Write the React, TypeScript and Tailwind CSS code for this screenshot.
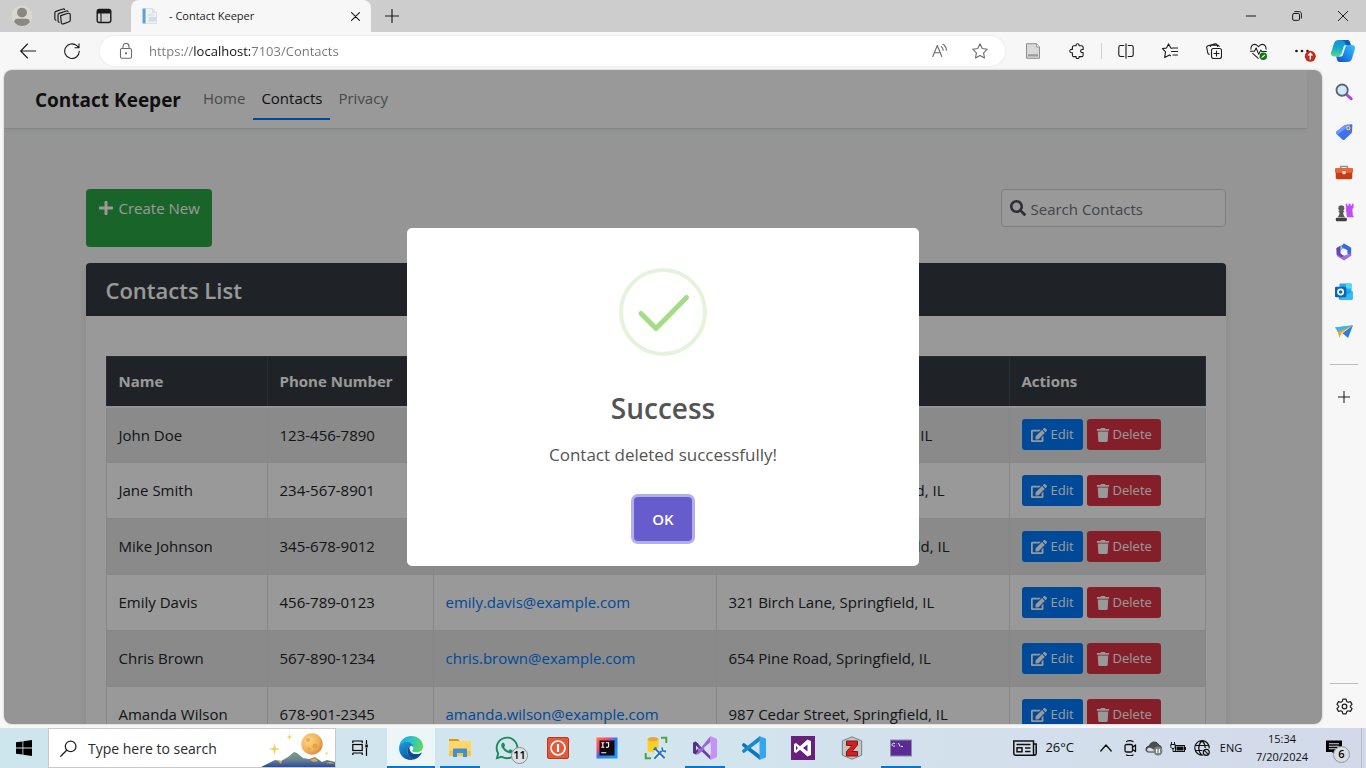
import type { ReactNode } from "react";
import { FaEdit, FaPlus, FaSearch, FaTrash, FaWhatsapp } from "react-icons/fa";

type Contact = { name: string; phone: string; email: string; address: string };

const contacts: Contact[] = [
  { name: "John Doe", phone: "123-456-7890", email: "john.doe@example.com", address: "123 Elm Street, Springfield, IL" },
  { name: "Jane Smith", phone: "234-567-8901", email: "jane.smith@example.com", address: "456 Oak Avenue, Springfield, IL" },
  { name: "Mike Johnson", phone: "345-678-9012", email: "mike.johnson@example.com", address: "789 Maple Street, Springfield, IL" },
  { name: "Emily Davis", phone: "456-789-0123", email: "emily.davis@example.com", address: "321 Birch Lane, Springfield, IL" },
  { name: "Chris Brown", phone: "567-890-1234", email: "chris.brown@example.com", address: "654 Pine Road, Springfield, IL" },
  { name: "Amanda Wilson", phone: "678-901-2345", email: "amanda.wilson@example.com", address: "987 Cedar Street, Springfield, IL" },
];

/* 16px line icon */
function Line({ children, className = "size-4" }: { children: ReactNode; className?: string }) {
  return (
    <svg viewBox="0 0 16 16" className={className} fill="none" stroke="currentColor" strokeWidth="1.1" strokeLinecap="round" strokeLinejoin="round" aria-hidden="true">
      {children}
    </svg>
  );
}

/* 24px colour icon */
function Art({ children, className = "size-6" }: { children: ReactNode; className?: string }) {
  return (
    <svg viewBox="0 0 24 24" className={className} fill="none" aria-hidden="true">
      {children}
    </svg>
  );
}

function IconButton({ label, className = "w-11", children }: { label: string; className?: string; children: ReactNode }) {
  return (
    <button type="button" aria-label={label} className={`flex h-full shrink-0 items-center justify-center ${className}`}>
      {children}
    </button>
  );
}

function TabStrip() {
  return (
    <div className="flex h-8 shrink-0 items-stretch bg-[#cdcdcd] pl-0.5 text-[#1b1b1b]">
      <IconButton label="Profile" className="w-10">
        <Art className="size-[22px]">
          <circle cx="12" cy="12" r="11.5" fill="#dad7d3" />
          <circle cx="12" cy="8.3" r="5.4" fill="#8c8783" />
          <path d="M3.5 18.5c0-2.400 1.600-3.500 3.500-3.500h10c1.900 0 3.500 1.100 3.500 3.500-1.800 3-5 4.500-8.500 4.500s-6.700-1.500-8.500-4.500z" fill="#8c8783" />
        </Art>
      </IconButton>
      <IconButton label="Workspaces" className="w-10">
        <Line className="size-[17px]">
          <path d="M6.300 7.200l7-2.200c1-.3 2 .3 2 1.300v5.200c0 .7-.4 1.200-1 1.400l-5.500 2c-1 .4-2-.2-2-1.300z" />
          <path d="M4.800 13.500c-.7-.3-1-.8-1-1.500V6.500c0-.7.4-1.200 1-1.400l6.800-2.300c.6-.2 1.200 0 1.500.5" />
          <path d="M1.800 11.500c-.7-.3-1-.8-1-1.500V4.600c0-.7.4-1.200 1-1.400L8.500 1c.6-.2 1.200 0 1.500.5" />
        </Line>
      </IconButton>
      <IconButton label="Tab actions" className="w-11">
        <Line>
          <rect x="1.200" y="1.500" width="13.600" height="13" rx="2.200" strokeWidth="1.400" />
          <path d="M1.500 5V3.500c0-1.200.8-2 2-2h9c1.200 0 2 .8 2 2V5z" fill="currentColor" />
          <path d="M5 5v9.500" />
        </Line>
      </IconButton>
      <div className="ml-[5px] flex w-60 items-center rounded-t-lg bg-[#f7f7f7] pl-[11px] text-[#1b1b1b]">
        <svg viewBox="0 0 16 16" className="size-4 shrink-0" aria-hidden="true">
          <path d="M3 .5h7.500l4 4v11H3z" fill="#eef2f6" stroke="#d3d9e0" strokeWidth=".7" />
          <path d="M10.500.5v4h4" fill="#dfe6ee" stroke="#cfd6de" strokeWidth=".6" />
          <rect x=".5" y=".5" width="3" height="15" fill="#5aa3d6" />
          <path d="M6 7h6M6 13h7" stroke="#ccd6e2" strokeWidth="1" />
          <rect x="7" y="9" width="8" height="4" fill="#d3dbe5" />
        </svg>
        <span className="ml-[11px] flex-1 truncate text-[11px]">- Contact Keeper</span>
        <button type="button" aria-label="Close tab" className="flex size-8 items-center justify-center">
          <Line className="size-[9px]">
            <path d="M1 1l14 14M15 1L1 15" strokeWidth="2" />
          </Line>
        </button>
      </div>
      <IconButton label="New tab" className="w-[42px]">
        <Line className="size-3.5">
          <path d="M8 .5v15M.5 8h15" strokeWidth="1.300" />
        </Line>
      </IconButton>
      <div className="flex-1" />
      <IconButton label="Minimize" className="w-[46px]">
        <Line className="size-2.5">
          <path d="M0 8h16" strokeWidth="1.600" />
        </Line>
      </IconButton>
      <IconButton label="Restore" className="w-[46px]">
        <Line className="size-2.5">
          <rect x="1" y="4" width="11" height="11" rx="2" strokeWidth="1.600" />
          <path d="M4.500 1h7C13.500 1 15 2.500 15 4.500v7" strokeWidth="1.600" />
        </Line>
      </IconButton>
      <IconButton label="Close" className="w-[46px]">
        <Line className="size-2.5">
          <path d="M.5.5l15 15M15.500.5l-15 15" strokeWidth="1.600" />
        </Line>
      </IconButton>
    </div>
  );
}

function Toolbar() {
  return (
    <div className="flex h-[38px] shrink-0 items-center bg-[#f7f7f7] pl-1.5 text-[#1b1b1b]">
      <IconButton label="Back">
        <Line>
          <path d="M7.500 1L.7 8l6.800 7M.8 8h15" />
        </Line>
      </IconButton>
      <IconButton label="Refresh">
        <Line>
          <path d="M15.300 8.300A7.300 7.300 0 1 1 12.800 2.700L15 4.700M15 .8v4h-4" />
        </Line>
      </IconButton>
      <div className="mx-1.5 flex h-[30px] min-w-0 flex-1 items-center rounded-full bg-white pl-[18px] shadow-[0_0_3px_rgba(0,0,0,0.08)]">
        <Line className="size-4 shrink-0 text-[#6b6b6b]">
          <rect x="2.500" y="5.500" width="11" height="9.700" rx="1.500" />
          <path d="M5 5.300V3.500a3 3 0 0 1 6 0v1.800" />
          <circle cx="8" cy="10.300" r=".6" fill="currentColor" />
        </Line>
        <input
          aria-label="Address"
          defaultValue="https://localhost:7103/Contacts"
          className="ml-[15px] h-6 min-w-0 flex-1 bg-[linear-gradient(to_right,#767676_45px,#111111_45px,#111111_101px,#767676_101px)] bg-clip-text text-[13px] text-transparent outline-none"
        />
        <button type="button" aria-label="Read aloud" className="flex w-10 items-center justify-center text-[#6b6b6b]">
          <Line>
            <path d="M.8 13.500L5.300 2.500l4.500 11M2.400 9.700h5.900M9.300 3.600c1.200.9 1.800 2 1.800 3.600M11 1.300c2.200 1.400 3.400 3.300 3.400 6" />
          </Line>
        </button>
        <button type="button" aria-label="Add to favorites" className="mr-[5px] flex w-10 items-center justify-center text-[#6b6b6b]">
          <Line>
            <path d="M8 .8l2.200 4.700 5.100.7-3.700 3.600.9 5.200L8 12.500 3.500 15l.9-5.200L.7 6.200l5.100-.7z" />
          </Line>
        </button>
      </div>
      <IconButton label="Extension">
        <svg viewBox="0 0 16 16" className="size-4" aria-hidden="true">
          <path d="M1.500.7h10L14.500 4v11.300h-13z" fill="#d9d9d9" stroke="#8e8e8e" strokeWidth="1" />
          <rect x="3" y="11.200" width="10" height="2.300" fill="#9b9b9b" />
          <path d="M11.500.7V4h3" fill="#f3f3f3" stroke="#8e8e8e" strokeWidth=".8" />
        </svg>
      </IconButton>
      <IconButton label="Extensions">
        <Line>
          <path d="M4.800 2.800h2.300c-.2-1.400.5-2.100 1.500-2.100s1.700.7 1.500 2.100h2.600c.8 0 1.400.6 1.400 1.400v2.300c-1.600-.3-2.500.4-2.500 1.500s.9 1.800 2.500 1.500v2.700c0 .8-.6 1.400-1.400 1.400h-2.600c.2 1.300-.5 1.900-1.500 1.900s-1.700-.6-1.500-1.900H4.800c-.8 0-1.400-.6-1.400-1.400V9.700C1.700 10 .8 9.200.8 8s.9-1.900 2.600-1.600V4.200c0-.8.6-1.400 1.400-1.400z" />
        </Line>
      </IconButton>
      <span className="mx-0.5 h-4 w-px bg-[#cfcfcf]" />
      <IconButton label="Split screen">
        <Line>
          <path d="M8 .8v14.400M5.800 2.500H2.500C1.500 2.500.8 3.200.8 4.200v7.600c0 1 .7 1.700 1.700 1.700h3.300M10.200 2.500h3.300c1 0 1.700.7 1.700 1.700v7.600c0 1-.7 1.700-1.700 1.700h-3.300" />
        </Line>
      </IconButton>
      <IconButton label="Favorites">
        <Line>
          <path d="M10 5.200H9L6.500.9 4.500 5l-4 .6 3 3.300-.8 5.500L7.500 12l1 .7M10.500 5h5M9.500 8.500h6M11 12h4.500" />
        </Line>
      </IconButton>
      <IconButton label="Collections">
        <Line>
          <rect x="5.500" y="5.500" width="10" height="10" rx="2" />
          <path d="M10.500 8v5M8 10.500h5M3.300 11.300C2.500 11.300 2 10.800 1.800 10L.7 4.700C.5 3.700 1 3 2 2.700L9.200.8c1-.2 1.800.3 2 1.200l.4 1.400M4.300 3.500c0-1 .5-1.400 1.500-1.400h5.500c1 0 1.700.5 1.900 1.400" />
        </Line>
      </IconButton>
      <IconButton label="Browser essentials">
        <svg viewBox="0 0 16 16" className="size-[17px]" fill="none" stroke="currentColor" strokeWidth="1" strokeLinejoin="round" aria-hidden="true">
          <path d="M.9 6.200C.5 3.300 2.200 1.300 4.400 1.300c1.600 0 2.700.9 3.600 2.200.9-1.300 2-2.200 3.600-2.200 2.200 0 3.900 2 3.500 4.900M2.300 9.500L8 14.800" />
          <path d="M0 7.700h4.200l1.600-3 2.400 6 1.900-4 1 1.300h4.700" />
          <circle cx="12.500" cy="12.500" r="3.500" fill="#0f7b0f" stroke="none" />
          <path d="M11 13.700l3-2.400" stroke="#fff" />
        </svg>
      </IconButton>
      <IconButton label="Settings and more">
        <svg viewBox="0 0 22 22" className="mt-1 ml-1.5 size-[22px]" aria-hidden="true">
          <circle cx="2.500" cy="9" r="1.300" fill="#1b1b1b" />
          <circle cx="8" cy="9" r="1.300" fill="#1b1b1b" />
          <circle cx="13.500" cy="9" r="1.300" fill="#1b1b1b" />
          <circle cx="16.300" cy="14.300" r="5.500" fill="#c42b1c" />
          <path d="M16.300 17.500v-6M14.200 13.500l2.100-2.200 2.100 2.200" stroke="#fff" strokeWidth="1.300" fill="none" />
        </svg>
      </IconButton>
      <IconButton label="Copilot" className="w-[42px]">
        <Art className="mr-1 size-6">
          <defs>
            <linearGradient id="cpA" x1="0" y1="0" x2="0" y2="1">
              <stop offset="0" stopColor="#0f8fe0" />
              <stop offset=".5" stopColor="#17acc4" />
              <stop offset="1" stopColor="#55d88c" />
            </linearGradient>
            <linearGradient id="cpB" x1="1" y1="0" x2="0" y2="1">
              <stop offset="0" stopColor="#35c5f5" />
              <stop offset=".6" stopColor="#1a7fe8" />
              <stop offset="1" stopColor="#1147c9" />
            </linearGradient>
          </defs>
          <path d="M8 1h8.500c1.500 0 2 .9 2.500 2.400L19.800 6h-4.300c-1.500 0-2.400.8-2.900 2.300L11 13.500c-.9 2.800-2.300 4-4.500 4H3.200C.6 17.500-.5 15.800.2 13.200L3 4.500C3.800 2 5.300 1 8 1z" fill="url(#cpA)" />
          <path d="M16 23H8.500C7 23 6.500 22.100 6 20.600L5.200 17.500h2.300c1.500 0 2.400-.8 2.900-2.300L12.500 9c.8-2.300 1.800-3 3.500-3h4.800c2.600 0 3.700 1.700 3 4.300L21 19.500c-.8 2.500-2.300 3.500-5 3.500z" fill="url(#cpB)" />
          <path d="M13.200 6.500h2.600c-.7.500-1.200 1-1.500 2L12 15.500c-.3 1-.8 1.600-1.500 2H8c1.200-.4 2-1.200 2.500-2.500l2.200-7c.2-.8.300-1.200.5-1.500z" fill="#eaf7fb" />
          <path d="M8 1h8.500c1.500 0 2 .9 2.500 2.400L19.800 6h-3.600c-1.200 0-1.700-.5-2-1.600C13.500 2 12 1 8 1z" fill="#0b5fc4" />
        </Art>
      </IconButton>
    </div>
  );
}

const sideApps: { label: string; icon: ReactNode }[] = [
  {
    label: "Search",
    icon: (
      <Art className="size-[18px]">
        <path d="M15 15l6.500 6" stroke="#b23ff0" strokeWidth="4" strokeLinecap="round" />
        <circle cx="9.500" cy="9.500" r="7.500" fill="#cdeafc" stroke="#5c6166" strokeWidth="2.400" />
      </Art>
    ),
  },
  {
    label: "Shopping",
    icon: (
      <Art className="size-[18px]">
        <path d="M13 2.500L22 1.500c.8 0 1.200.4 1.200 1.200L22.500 13 13 22c-1 1-2.200 1-3.200 0L2 14.500c-1-1-1-2.200 0-3.200z" fill="#3f6ff2" />
        <path d="M13 2.500L22 1.500 3 15.500l-1-1c-1-1-1-2.200 0-3.200z" fill="#6a9bff" />
        <circle cx="17.800" cy="6.800" r="2.200" fill="#4a78e8" stroke="#ffd84a" strokeWidth="1.500" />
      </Art>
    ),
  },
  {
    label: "Tools",
    icon: (
      <Art className="size-[18px]">
        <path d="M7.500 7V4.500h9V7" stroke="#8b9298" strokeWidth="2" />
        <rect x="1" y="6.500" width="22" height="15" rx="1.500" fill="#c73d13" />
        <rect x="0" y="6.500" width="24" height="6.500" rx="1.500" fill="#ea6533" />
        <rect x="9.800" y="10.500" width="4.500" height="4.500" rx="1" fill="#e6e9ec" />
      </Art>
    ),
  },
  {
    label: "Games",
    icon: (
      <Art className="size-[19px]">
        <path d="M13.500 1h2v2h1.700V1h2.500v2h1.700V1h2v5l-1.500 1.500.7 8.500h1v2h-8.500l-1-8z" fill="#c04df5" />
        <circle cx="8" cy="6.500" r="3.800" fill="#5c5c5c" />
        <path d="M4.500 10h7v1.800h-1.300c.1 2.700.9 4.600 2.600 6.200H3.200c1.700-1.600 2.500-3.500 2.600-6.200H4.500z" fill="#565656" />
        <rect x="1" y="18.500" width="14" height="4.500" rx="1.500" fill="#3f3f3f" />
      </Art>
    ),
  },
  {
    label: "Microsoft 365",
    icon: (
      <Art className="size-[18px]">
        <path d="M12 .8l9.500 5.600v4.200L12 7.500 7.500 10v7.500L2 15V6.800z" fill="#8fb7f4" />
        <path d="M12 .8l9.500 5.600v10.500l-5-3V9.500L8.500 5z" fill="#3c66dc" />
        <path d="M2 15.500V7l5-3v10l5 3 9.500-3.500v3.500L12 23.200 3.500 18z" fill="#a070d8" />
        <path d="M2 7l5-3v10l5 3-3 2-6-3.500z" fill="#6246b8" />
        <path d="M12 7.500l4 2.300v4.600l-4 2.300-4-2.300V9.800z" fill="#f7f7f7" />
      </Art>
    ),
  },
  {
    label: "Outlook",
    icon: (
      <Art className="size-[18px]">
        <rect x="6" y=".5" width="16" height="15" rx="1" fill="#28a8ea" />
        <rect x="14.500" y=".5" width="7.500" height="7" fill="#50d9ff" />
        <path d="M5 11h18.500v10c0 .8-.5 1.300-1.300 1.300H6.300C5.500 22.300 5 21.800 5 21z" fill="#1aa0e8" />
        <path d="M5 22l18.500-11v10c0 .8-.5 1.300-1.300 1.300z" fill="#32bdf2" />
        <rect x="0" y="5" width="15" height="14" rx="1.500" fill="#0f64b8" />
        <circle cx="7.500" cy="12" r="3.500" stroke="#fff" strokeWidth="2.200" />
      </Art>
    ),
  },
  {
    label: "Drop",
    icon: (
      <Art className="size-[18px]">
        <path d="M0 6l24-3-14 8z" fill="#37b6f0" />
        <path d="M24 3L9 13l-3 7-3-10z" fill="#f5a623" />
        <path d="M0 6l24-3L4 12z" fill="#37b6f0" />
        <path d="M24 3l-6.500 17L10 13.500z" fill="#2b7fe0" />
      </Art>
    ),
  },
];

function Sidebar() {
  return (
    <aside className="flex w-11 shrink-0 flex-col items-center pt-0.5 text-[#1b1b1b]">
      {sideApps.map((a) => (
        <button key={a.label} type="button" aria-label={a.label} className="flex h-10 w-11 items-center justify-center">
          {a.icon}
        </button>
      ))}
      <span className="mt-3 h-px w-7 bg-[#bdbdbd]" />
      <button type="button" aria-label="Customize" className="mt-3 flex h-10 w-11 items-center justify-center">
        <Line className="size-3">
          <path d="M8 .5v15M.5 8h15" strokeWidth="1.400" />
        </Line>
      </button>
      <span className="mt-auto h-px w-7 bg-[#bdbdbd]" />
      <button type="button" aria-label="Settings" className="flex h-11 w-11 items-center justify-center">
        <Line className="size-[17px]">
          <path d="M6.500 1h3l.6 2.200 1.300.8 2.200-.6 1.500 2.600L13.500 7.600v.8l1.600 1.600-1.500 2.600-2.200-.6-1.300.8-.6 2.200h-3l-.6-2.200-1.300-.8-2.200.6L.9 10l1.600-1.600v-.8L.9 6l1.500-2.600 2.200.6 1.300-.8z" />
          <circle cx="8" cy="8" r="2.200" />
        </Line>
      </button>
    </aside>
  );
}

function Navbar() {
  return (
    <nav className="flex h-[59px] items-start border-b border-[#dee2e6] bg-white pl-[31px] shadow-[0_2px_6px_rgba(0,0,0,0.05)]">
      <a href="#home" className="pt-[15px] text-[19px] leading-[30px] font-bold text-[#1a1a1a]">
        Contact Keeper
      </a>
      <ul className="ml-3.5 flex pt-2 text-[15px] leading-6 text-[#7b7b7b]">
        <li>
          <a href="#home" className="block px-2 py-2">Home</a>
        </li>
        <li>
          <a href="#contacts" className="block border-b-2 border-[#007bff] px-2 py-2 text-[#1a1a1a]">Contacts</a>
        </li>
        <li>
          <a href="#privacy" className="block px-2 py-2">Privacy</a>
        </li>
      </ul>
    </nav>
  );
}

const headCell = "border border-b-2 border-[#454d55] border-b-[#f8f9fa] px-3 text-left font-bold";
const bodyCell = "border border-[#dee2e6] px-3";

function ContactsTable() {
  return (
    <table className="w-full table-fixed border-collapse text-[15px] text-[#212529]">
      <colgroup>
        <col className="w-[161px]" />
        <col className="w-[166px]" />
        <col className="w-[283px]" />
        <col className="w-[293px]" />
        <col />
      </colgroup>
      <thead className="bg-[#343a40] text-white">
        <tr className="h-[50px]">
          <th className={headCell}>Name</th>
          <th className={headCell}>Phone Number</th>
          <th className={headCell}>Email</th>
          <th className={headCell}>Address</th>
          <th className={headCell}>Actions</th>
        </tr>
      </thead>
      <tbody>
        {contacts.map((c) => (
          <tr key={c.name} className="h-14 odd:bg-[#e6e6e6]">
            <td className={bodyCell}>{c.name}</td>
            <td className={bodyCell}>{c.phone}</td>
            <td className={bodyCell}>
              <a href={`mailto:${c.email}`} className="text-[#007bff]">{c.email}</a>
            </td>
            <td className={bodyCell}>{c.address}</td>
            <td className={bodyCell}>
              <div className="flex gap-1 text-[13px] text-white">
                <button type="button" className="flex h-[31px] items-center gap-1 rounded-[3px] bg-[#007bff] px-[9px]">
                  <FaEdit className="size-4" />
                  Edit
                </button>
                <button type="button" className="flex h-[31px] items-center gap-[3px] rounded-[3px] bg-[#dc3545] px-[9px]">
                  <FaTrash className="size-3.5" />
                  Delete
                </button>
              </div>
            </td>
          </tr>
        ))}
      </tbody>
    </table>
  );
}

function ContactsPage() {
  return (
    <div className="h-full bg-[#f8f9fa]">
      <div className="pr-[15px]">
        <Navbar />
        <main className="mx-auto max-w-[1140px] pt-[60px]">
          <div className="flex items-start justify-between">
            <button type="button" className="flex h-[58px] items-start gap-[5px] rounded bg-[#28a745] px-3 pt-[7px] text-[15px] leading-6 text-white">
              <FaPlus className="mt-1 size-4" />
              Create New
            </button>
            <label className="flex h-[38px] w-[225px] items-center gap-[5px] rounded border border-[#ced4da] bg-white px-2 text-[15px]">
              <FaSearch className="size-4 shrink-0 text-[#495057]" />
              <input type="search" aria-label="Search contacts" placeholder="Search Contacts" className="min-w-0 flex-1 pt-0.5 outline-none placeholder:text-[#6c757d]" />
            </label>
          </div>
          <section className="mt-4 rounded bg-white shadow-[0_4px_8px_rgba(0,0,0,0.1)]">
            <h2 className="flex h-[53px] items-center rounded-t bg-[#343a40] px-5 pt-0.5 text-[22px] font-semibold text-white">Contacts List</h2>
            <div className="px-5 pt-10">
              <ContactsTable />
            </div>
          </section>
        </main>
      </div>
    </div>
  );
}

function SuccessDialog() {
  return (
    <div className="absolute inset-0 flex items-center justify-center bg-black/40">
      <div role="dialog" aria-modal="true" aria-labelledby="dialog-title" className="flex w-lg flex-col items-center rounded-[5px] bg-white pt-10 pb-[25px]">
        <svg viewBox="0 0 88 88" className="size-[88px]" fill="none" aria-hidden="true">
          <circle cx="44" cy="44" r="42" stroke="#e4f4dc" strokeWidth="4" />
          <path d="M22 45.500L37 60.500L67.500 29.500" stroke="#a5dc86" strokeWidth="5" strokeLinecap="round" strokeLinejoin="round" />
        </svg>
        <h2 id="dialog-title" className="mt-[34px] text-[28px] leading-9 font-semibold text-[#545454]">Success</h2>
        <p className="mt-[17px] text-[17px] leading-6 text-[#545454]">Contact deleted successfully!</p>
        <button type="button" className="mt-[30px] h-11 w-[58px] rounded-[4px] bg-[#665ccb] text-[15px] font-semibold text-white shadow-[0_0_0_3px_#b2adeb]">
          OK
        </button>
      </div>
    </div>
  );
}

const taskApps: { label: string; state: string; icon: ReactNode }[] = [
  {
    label: "Microsoft Edge",
    state: "active",
    icon: (
      <Art>
        <defs>
          <linearGradient id="edA" x1="0" y1=".3" x2="1" y2=".5">
            <stop offset="0" stopColor="#23a8e0" />
            <stop offset=".5" stopColor="#2bc3c4" />
            <stop offset="1" stopColor="#62d957" />
          </linearGradient>
          <linearGradient id="edB" x1="0" y1="0" x2=".4" y2="1">
            <stop offset="0" stopColor="#1b9de2" />
            <stop offset="1" stopColor="#0b5aa8" />
          </linearGradient>
        </defs>
        <path d="M.2 11C.8 4.500 6 0 12.200 0 19 0 24 4.800 24 10.200c0 3.800-2.900 6.300-6.500 6.300-2.700 0-4.300-.8-4.300-1.700 0-.7 1-1 1-2.800 0-2.400-2.400-4.500-5.700-4.500C4.800 7.500 1.500 9 .2 11z" fill="url(#edA)" />
        <path d="M.1 12c.2-3.400 4-6 8-6 3.800 0 6.200 2.600 6.100 5.500C12 9.300 8.300 11 8.300 14.800c0 3.700 2.900 6.700 6.700 8.800-1 .3-2 .4-3 .4C5 24 0 18.500.1 12z" fill="url(#edB)" />
        <path d="M8.300 14.800c0-1.900.9-3.400 2.500-4.400-.8 3.600 2 7.600 6.500 7.600 2 0 3.500-.5 4.700-1.300.5-.3.900.1.600.6-2.300 3.900-5.200 5.700-7.600 6.300-3.800-1.600-6.700-5.100-6.700-8.800z" fill="#0c4c8e" />
        <path d="M14.200 11.800c0 1.700-1.100 2.100-1.100 3 0 1.200 1.800 1.900 4.300 1.900 1.800 0 3.700-.7 5-2v1.600c-1.400 1.200-3 1.700-5 1.700-4 0-6.800-2.300-6.800-5.300 0-1.300.7-2.400 1.600-3 1.100.3 2 1 2 2.100z" fill="#ecf5f8" />
      </Art>
    ),
  },
  {
    label: "File Explorer",
    state: "open",
    icon: (
      <Art>
        <path d="M1 3h9l2 2.500H1z" fill="#d99a0b" />
        <path d="M1 5h21c.6 0 1 .4 1 1v13c0 .6-.4 1-1 1H2c-.6 0-1-.4-1-1z" fill="#ffd667" />
        <path d="M1 15h22v4c0 .6-.4 1-1 1H2c-.6 0-1-.4-1-1z" fill="#f9c544" />
        <path d="M5 21v-7.500c0-.6.500-1 1-1h12c.6 0 1 .4 1 1V21h-4v-4H9v4z" fill="#3e8fd6" />
      </Art>
    ),
  },
  {
    label: "WhatsApp",
    state: "",
    icon: (
      <span className="relative mr-1">
        <FaWhatsapp className="size-[26px] text-[#1a8a5a]" />
        <span className="absolute top-3 left-[17px] flex size-[17px] items-center justify-center rounded-full border border-[#8a8f93] bg-[#dce3e6] text-[11px] font-semibold text-black">11</span>
      </span>
    ),
  },
  {
    label: "Power",
    state: "",
    icon: (
      <Art>
        <rect x="1.500" y="1.500" width="21" height="21" rx="1.500" fill="#e65738" stroke="#b53b20" />
        <circle cx="12" cy="12" r="7" stroke="#fff" strokeWidth="1.700" />
        <path d="M12 8v8" stroke="#fff" strokeWidth="2.200" />
      </Art>
    ),
  },
  {
    label: "IntelliJ IDEA",
    state: "",
    icon: (
      <Art>
        <defs>
          <linearGradient id="ijA" x1="0" y1="0" x2="1" y2="1">
            <stop offset="0" stopColor="#ff7a2a" />
            <stop offset=".3" stopColor="#ff3f7c" />
            <stop offset=".5" stopColor="#2b7bf6" />
            <stop offset="1" stopColor="#1ba0ff" />
          </linearGradient>
        </defs>
        <rect x="1.500" y="1.500" width="21" height="21" fill="url(#ijA)" />
        <rect x="4.500" y="4.500" width="15" height="15" fill="#15060f" />
        <path d="M6.300 6.800h3M7.800 6.800v4.500M6.300 11.300h3M10.800 6.800h2.800v3.500c0 1-1.300 1.400-2.600.8M6.300 16.800h5" stroke="#fff" strokeWidth="1.100" />
      </Art>
    ),
  },
  {
    label: "Database tools",
    state: "",
    icon: (
      <Art>
        <path d="M3.500 3v12c2 1.800 8.500 1.800 11 0V3z" fill="#fbd11f" />
        <ellipse cx="9" cy="3.200" rx="5.500" ry="2.200" fill="#e9a43c" />
        <path d="M17 1.700h5.300V7M1.700 17v5.300H7" stroke="#4ba348" strokeWidth="2" />
        <path d="M11 13l8.500 8.500M20.500 12.500L11 22" stroke="#f0f6fa" strokeWidth="4.500" />
        <path d="M11 12.500l9 9M17 15.500l-6 6.500" stroke="#2676c4" strokeWidth="2" strokeLinecap="round" />
        <path d="M18 11.500l.7 3.300 3.300.7M9.500 14l3-2.500" stroke="#2676c4" strokeWidth="1.800" />
      </Art>
    ),
  },
  {
    label: "Visual Studio",
    state: "open",
    icon: (
      <Art>
        <path d="M0 7l2.500-1.500L17.500 20v3.800L0 7z" fill="#6b3da8" />
        <path d="M0 7l2.500-1.500 3 2.500v8l-3 2.500L0 17z" fill="#52308a" />
        <path d="M2.500 18.500L17.500 0v8.500L5 18.500 2.500 18.500z" fill="#9a68d4" />
        <path d="M17.500 0L24 3v18l-6.500 3z" fill="#c493f5" />
        <path d="M17.500 6v12l-7-6z" fill="#d5def0" />
        <path d="M3 9.500v5l2.500-2.500z" fill="#d5def0" />
      </Art>
    ),
  },
  {
    label: "Visual Studio Code",
    state: "",
    icon: (
      <Art>
        <path d="M0 8.500l1.700-1.800L18 19v5L.3 10z" fill="#0f74b9" />
        <path d="M0 15.500l1.700 1.800L18 5V0L.3 14z" fill="#1a88ce" />
        <path d="M17.500 0L24 2.800v18.400L17.500 24z" fill="#35a5ee" />
      </Art>
    ),
  },
  {
    label: "Visual Studio 2012",
    state: "",
    icon: (
      <Art>
        <rect width="24" height="24" fill="#68217a" />
        <path d="M16.500 3.500L20 5v14l-3.500 1.500L9 13.700 5 17l-2-1V8l2-1 4 3.300zM16.500 8.500L12 12l4.500 3.500zM5 9.800v4.400L7 12z" fill="#fff" fillRule="evenodd" />
      </Art>
    ),
  },
  {
    label: "Zotero",
    state: "",
    icon: (
      <Art>
        <path d="M12 .8l9.700 4v14.400L12 23.200l-9.700-4V4.800z" fill="#c3c6c7" stroke="#7b7f80" strokeWidth="1" />
        <path d="M6.500 5h11v4L12 15.500h5.500V20h-11v-4.500L12 9.500H6.500z" fill="#d42020" stroke="#861313" strokeWidth="1" />
      </Art>
    ),
  },
  {
    label: "Developer command prompt",
    state: "open",
    icon: (
      <Art>
        <rect x="1.500" y="4" width="21" height="16" fill="#5b2a97" stroke="#8a8f98" strokeWidth="1" />
        <path d="M6 7.500c-2-.8-3 .3-3 1.200s1 2 3 1.200M7.800 7.800v.2M7.800 9.800v.2M9.500 7l1.500 3.500M12 10.500h2" stroke="#fff" strokeWidth=".9" />
      </Art>
    ),
  },
];

function Tray() {
  return (
    <div className="flex h-full items-center text-[11px] text-[#101010]">
      <svg viewBox="0 0 24 16" className="h-4 w-6" fill="none" stroke="currentColor" strokeWidth="1.500" aria-hidden="true">
        <path d="M20.500 4h2.700v9.500c0 1-.8 1.700-1.700 1.700H2.500c-1 0-1.700-.7-1.700-1.700V1h19.700v12.500c0 .8.500 1.500 1.200 1.500" />
        <path d="M3.500 4.500h14M12 8h5.500M12 11.500h5.500" />
        <rect x="4" y="7.800" width="5" height="4" />
      </svg>
      <span className="mr-5 ml-2 text-[13px]">26°C</span>
      <div className="flex h-full">
        <IconButton label="Show hidden icons" className="w-6">
          <Line className="size-3">
            <path d="M1 12l7-8 7 8" strokeWidth="1.700" />
          </Line>
        </IconButton>
        <IconButton label="Meet now" className="w-6">
          <Line>
            <rect x="3" y="4.500" width="7.500" height="7.500" rx="1.500" strokeWidth="1.300" />
            <path d="M10.500 7.200L13.500 5v6.500l-3-2M4.500 1.500c2-1 4.500-1 6.500 0M4.500 15c2 1 4.500 1 6.500 0" strokeWidth="1.300" />
          </Line>
        </IconButton>
        <IconButton label="OneDrive" className="w-6">
          <svg viewBox="0 0 18 16" className="h-4 w-[18px]" aria-hidden="true">
            <path d="M1 9.500C1 7.300 2.600 6 4.500 6 5 3.500 7 2 9.300 2c2.200 0 3.800 1.300 4.500 3.300 1.600.2 2.700 1.500 2.700 3L11 12H3.500C2 12 1 11 1 9.500z" fill="#4b4f52" stroke="#33373a" />
            <path d="M2 9.500c.5-1.700 2.500-2.200 4-1.500l6 3.500H4c-1.200 0-2-.8-2-2z" fill="#d4d9dd" />
            <circle cx="13" cy="11" r="4.500" fill="#7d8285" />
            <path d="M11.700 9v4M14.300 9v4" stroke="#fff" strokeWidth="1.200" />
          </svg>
        </IconButton>
        <IconButton label="Battery" className="w-6">
          <svg viewBox="0 0 16 14" className="h-3.5 w-4" fill="none" stroke="currentColor" aria-hidden="true">
            <rect x="5.500" y="4.500" width="9" height="6" />
            <rect x="7" y="6" width="6" height="3" fill="currentColor" />
            <path d="M15.500 6v3M1.500 1v2.500M4.500 1v2.500M.8 3.500h4.400v2.300c0 1-.7 1.700-2.200 1.700S.8 6.800.8 5.800zM3 7.500v3h2" />
          </svg>
        </IconButton>
        <IconButton label="Network" className="w-6">
          <Line>
            <path d="M9 15A7.200 7.200 0 1 1 15.200 8M1.500 5.500h13M1.500 10.500H8M8 .8C5.500 3 4.800 5.500 4.800 8s.7 5 3.200 7.200M8 .8C10.500 3 11.200 5 11.200 7.500" strokeWidth="1.200" />
            <circle cx="12.300" cy="12.300" r="3" strokeWidth="1.200" />
            <path d="M10.300 10.300l4 4" strokeWidth="1.200" />
          </Line>
        </IconButton>
      </div>
      <button type="button" className="flex h-full w-[34px] items-center justify-center">ENG</button>
      <div className="flex w-[68px] flex-col items-center leading-[18px]">
        <time>15:34</time>
        <time>7/20/2024</time>
      </div>
      <button type="button" aria-label="Notifications" className="relative flex h-full w-[46px] items-center border-r border-[#b3bcc9] pl-2.5">
        <svg viewBox="0 0 16 16" className="size-4" aria-hidden="true">
          <path d="M0 .5h16v11.500H9.500V16L6 12H0z" fill="#000" />
          <path d="M3 3.800h10M3 6.300h10M3 8.800h7" stroke="#d3dae8" strokeWidth="1.100" />
        </svg>
        <span className="absolute top-[18px] left-[17px] flex size-[17px] items-center justify-center rounded-full border border-[#8f959a] bg-[#d9dde1] text-[11px] font-semibold text-black">6</span>
      </button>
      <span className="w-1" />
    </div>
  );
}

function Taskbar() {
  return (
    <footer className="flex h-10 shrink-0 items-center bg-linear-to-r from-[#cde5ec] via-[#d2e5ee] to-[#d3d9e9]">
      <button type="button" aria-label="Start" className="flex h-full w-12 items-center justify-center">
        <svg viewBox="0 0 16 16" className="size-4" aria-hidden="true">
          <path d="M0 2.300l6.500-.9v6.200H0zM7.300 1.300L16 0v7.600H7.300zM0 8.400h6.500v6.200L0 13.700zM7.300 8.400H16V16l-8.700-1.300z" fill="#000" />
        </svg>
      </button>
      <label className="flex h-full w-72 items-center border border-[#c5c9cb] bg-white pl-[11px] text-[#1f1f1f]">
        <Line className="size-[17px] shrink-0">
          <circle cx="10" cy="6" r="5" strokeWidth="1.200" />
          <path d="M6.300 9.700L.7 15.300" strokeWidth="1.200" />
        </Line>
        <input aria-label="Search" placeholder="Type here to search" className="ml-[11px] min-w-0 flex-1 text-[14px] outline-none placeholder:text-[#2b2b2b]" />
        <svg viewBox="0 0 75 36" className="h-9 w-[75px] shrink-0 self-end" aria-hidden="true">
          <defs>
            <linearGradient id="hill" x1="0" y1="0" x2="0" y2="1">
              <stop offset="0" stopColor="#6ea57b" />
              <stop offset=".5" stopColor="#6d8590" />
              <stop offset="1" stopColor="#2b4b9b" />
            </linearGradient>
            <radialGradient id="moon" cx=".35" cy=".35" r=".8">
              <stop offset="0" stopColor="#fbd98a" />
              <stop offset=".6" stopColor="#efb052" />
              <stop offset="1" stopColor="#d47a35" />
            </radialGradient>
          </defs>
          <circle cx="52" cy="13" r="10.700" fill="url(#moon)" />
          <circle cx="48" cy="9" r="2" fill="#e9ad55" />
          <circle cx="55" cy="15" r="2.500" fill="#e3a04c" />
          <circle cx="49" cy="18" r="1.500" fill="#e5a44c" />
          <path d="M14.500 12.500l1.200 4.300 4.300 1.200-4.300 1.200-1.200 4.300-1.200-4.300L9 18l4.300-1.200zM29.500 3l.7 2.300 2.300.7-2.300.7-.7 2.300-.7-2.300-2.300-.7 2.300-.7zM66.500 20.500l.5 1.500 1.500.5-1.500.5-.5 1.500-.5-1.500-1.500-.5 1.500-.5z" fill="#f6cf5c" />
          <path d="M1 36l6-3 8-4 6 1 7-4 6-5 3 1 6 5 6 1 6-2 7 5 5-2 8 2v5z" fill="url(#hill)" />
          <path d="M17 29l5 1-1 3zM50 29l5-2 3 3-4 1zM65 32l5-1 5 2z" fill="#d7ab52" />
        </svg>
      </label>
      <button type="button" aria-label="Task view" className="flex h-full w-12 items-center justify-center">
        <svg viewBox="0 0 16 16" className="size-4" fill="none" stroke="#000" strokeWidth="1.200" aria-hidden="true">
          <path d="M.8 3V1h9.400v2M.8 15v-2M.8 13h9.400v2" />
          <rect x=".8" y="4.500" width="9.400" height="6" />
          <path d="M14.500 0v4M14.500 8v8" />
          <rect x="13.300" y="4.500" width="2.500" height="3" fill="#000" stroke="none" />
        </svg>
      </button>
      <div className="ml-[3px] flex h-full gap-px">
        {taskApps.map((a) => (
          <button
            key={a.label}
            type="button"
            aria-label={a.label}
            className={`flex h-full w-12 flex-col items-center ${a.state === "active" ? "bg-[#ecf5f8]" : ""}`}
          >
            <span className="flex flex-1 items-center justify-center">{a.icon}</span>
            {a.state && <span className={`-mt-0.5 h-0.5 bg-[#0078d7] ${a.state === "active" ? "w-12" : "w-10"}`} />}
          </button>
        ))}
      </div>
      <div className="flex-1" />
      <Tray />
    </footer>
  );
}

export default function App() {
  return (
    <div className="flex h-screen flex-col overflow-hidden bg-[#f7f7f7] font-['Open_Sans','Noto_Sans',sans-serif]">
      <TabStrip />
      <Toolbar />
      <div className="flex min-h-0 flex-1">
        <div className="relative mb-1 ml-1 min-w-0 flex-1 overflow-hidden rounded-lg shadow-[0_0_2px_rgba(0,0,0,0.3)]">
          <ContactsPage />
          <SuccessDialog />
        </div>
        <Sidebar />
      </div>
      <Taskbar />
    </div>
  );
}
